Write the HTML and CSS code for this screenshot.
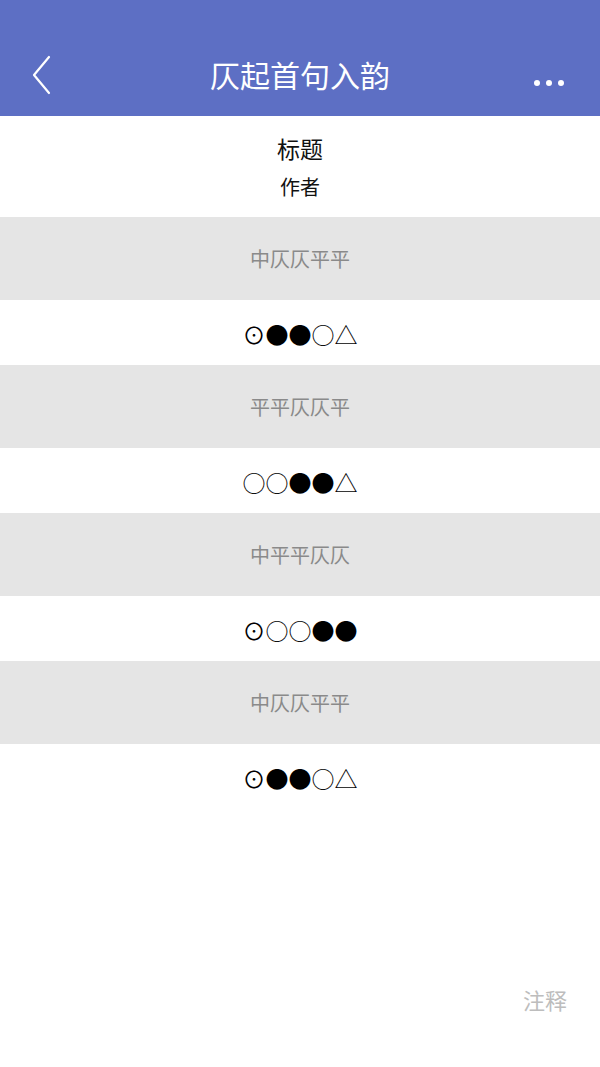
FILE: index.html
```html
<!DOCTYPE html>
<html lang="zh">
<head>
<meta charset="utf-8">
<link rel="stylesheet" href="styles.css">
</head>
<body>
<div class="page">
  <header class="nav">
    <svg class="back" width="24" height="40" viewBox="0 0 24 40"><path d="M19 2 L4 20 L19 38" fill="none" stroke="#fff" stroke-width="2.2" stroke-linecap="round" stroke-linejoin="round"/></svg>
    <div class="nav-title">仄起首句入韵</div>
    <div class="more"><span></span><span></span><span></span></div>
  </header>
  <section class="head">
    <div class="title">标题</div>
    <div class="author">作者</div>
  </section>
  <div class="row tone">中仄仄平平</div>
  <div class="row sym">⊙●●○△</div>
  <div class="row tone">平平仄仄平</div>
  <div class="row sym">○○●●△</div>
  <div class="row tone">中平平仄仄</div>
  <div class="row sym">⊙○○●●</div>
  <div class="row tone">中仄仄平平</div>
  <div class="row sym">⊙●●○△</div>
  <div class="spacer"></div>
  <div class="note">注释</div>
</div>
</body>
</html>
```
FILE: styles.css
```css
html, body { margin: 0; padding: 0; background: #fff; }
body { font-family: "Noto Sans CJK SC", "Noto Sans", sans-serif; }
.page { width: 600px; height: 1067px; display: flex; flex-direction: column; }
.nav { height: 116px; background: #5d6fc4; display: flex; align-items: center; padding-top: 34px; box-sizing: border-box; position: relative; }
.back { position: absolute; left: 30px; top: 55px; }
.nav-title { flex: 1; text-align: center; color: #fff; font-size: 30px; line-height: 40px; margin-top: -2px; }
.more { position: absolute; right: 36px; top: 80px; display: flex; gap: 6px; }
.more span { width: 6px; height: 6px; border-radius: 50%; background: #fff; }
.head { height: 101px; display: flex; flex-direction: column; align-items: center; padding-top: 16px; box-sizing: border-box; }
.title { font-size: 23px; line-height: 32px; color: #111; }
.author { font-size: 20px; line-height: 30px; color: #111; margin-top: 8px; }
.row { display: flex; align-items: center; justify-content: center; }
.tone { height: 83px; background: #e5e5e5; color: #8a8a8a; font-size: 20px; }
.sym { height: 65px; background: #fff; color: #000; font-size: 23px; padding-top: 2px; box-sizing: border-box; }
.spacer { flex: 1; }
.note { align-self: flex-end; margin-right: 33px; margin-bottom: 52px; font-size: 22px; color: #bdbdbd; }
```
